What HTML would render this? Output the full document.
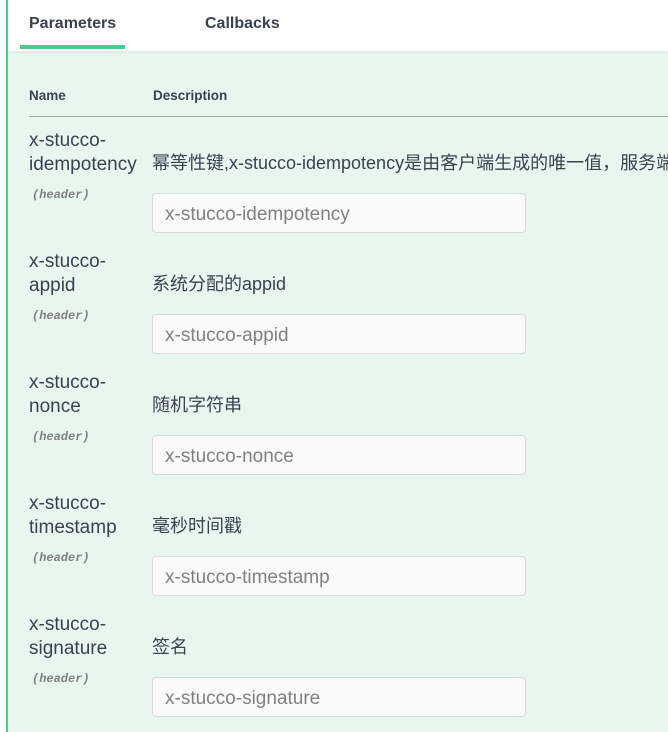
<html><head><style>
body{margin:0;width:668px;height:732px;overflow:hidden;background:#fff;font-family:"Liberation Sans","Noto Sans CJK SC",sans-serif;position:relative}
.bar{position:absolute;left:6px;top:0;width:2px;height:732px;background:#49cc90}
.tabs{position:absolute;left:8px;top:0;right:0;height:51px;background:#fff;box-shadow:0 1px 2px rgba(0,0,0,.12)}
.tab{position:absolute;top:15px;font-size:16px;font-weight:bold;color:#3b4151}
.ul{position:absolute;left:20px;top:45px;width:105px;height:4px;background:#49cc90}
.main{position:absolute;left:8px;top:52px;right:0;bottom:0;background:#e8f6f0}
.th{position:absolute;top:88px;font-size:13.5px;font-weight:bold;color:#3b4151}
.hr{position:absolute;left:29px;top:116px;right:0;height:1px;background:#a0a8a4}
.n{position:absolute;left:29px;font-size:19px;line-height:24px;color:#3b4151}
.h{position:absolute;left:32px;font-family:"Liberation Mono",monospace;font-style:italic;font-weight:bold;font-size:12px;color:#808080}
.d{position:absolute;left:152px;font-size:18px;color:#3b4151;white-space:nowrap}
.in{position:absolute;left:152px;border:1px solid #d9d9d9;border-radius:4px;background:#fafafa;box-sizing:border-box;width:374px;height:40px;font-size:19px;color:#808080;padding:10px 0 0 12px}
</style></head><body>
<div class="main"></div>
<div class="tabs"></div>
<div class="bar"></div>
<div class="tab" style="left:29px">Parameters</div>
<div class="tab" style="left:205px">Callbacks</div>
<div class="ul"></div>
<div class="th" style="left:29px">Name</div>
<div class="th" style="left:153px">Description</div>
<div class="hr"></div>

<div class="n" style="top:129px">x-stucco-<br>idempotency</div>
<div class="h" style="top:188px">(header)</div>
<div class="d" style="top:149px">幂等性键,x-stucco-idempotency是由客户端生成的唯一值，服务端</div>
<div class="in" style="top:193px">x-stucco-idempotency</div>

<div class="n" style="top:250px">x-stucco-<br>appid</div>
<div class="h" style="top:309px">(header)</div>
<div class="d" style="top:270px">系统分配的appid</div>
<div class="in" style="top:314px">x-stucco-appid</div>

<div class="n" style="top:371px">x-stucco-<br>nonce</div>
<div class="h" style="top:430px">(header)</div>
<div class="d" style="top:391px">随机字符串</div>
<div class="in" style="top:435px">x-stucco-nonce</div>

<div class="n" style="top:492px">x-stucco-<br>timestamp</div>
<div class="h" style="top:551px">(header)</div>
<div class="d" style="top:512px">毫秒时间戳</div>
<div class="in" style="top:556px">x-stucco-timestamp</div>

<div class="n" style="top:613px">x-stucco-<br>signature</div>
<div class="h" style="top:672px">(header)</div>
<div class="d" style="top:633px">签名</div>
<div class="in" style="top:677px">x-stucco-signature</div>
</body></html>
